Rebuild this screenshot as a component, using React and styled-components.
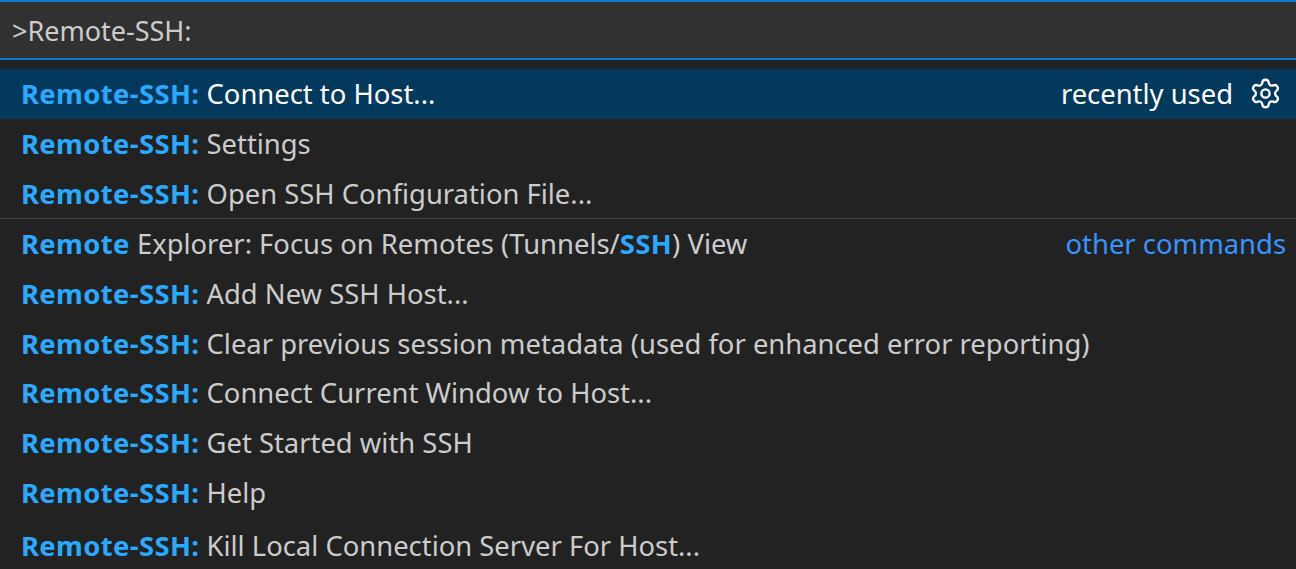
import React from 'react';
import styled, { createGlobalStyle } from 'styled-components';
import { Settings } from 'lucide-react';

const Global = createGlobalStyle`
  body { margin: 0; background: #222222; font-family: "Noto Sans", "Open Sans", sans-serif; }
`;

const Page = styled.div`
  width: 1296px;
  height: 569px;
  background: #222222;
  overflow: hidden;
`;

const InputBox = styled.div`
  height: 56px;
  background: #313131;
  border-top: 2px solid #0a78d4;
  border-bottom: 2px solid #0a78d4;
  display: flex;
  align-items: center;
  padding-left: 12px;
  color: #cccccc;
  font-size: 27px;
`;

const List = styled.div`
  margin-top: 9px;
`;

const Row = styled.div`
  height: 49.7px;
  display: flex;
  align-items: center;
  padding: 0 14px 0 21px;
  font-size: 27.4px;
  color: ${p => (p.$active ? '#ffffff' : '#cccccc')};
  background: ${p => (p.$active ? '#04395e' : 'transparent')};
  border-top: ${p => (p.$sep ? '1px solid #454545' : 'none')};
  white-space: nowrap;
  &:last-child { padding-top: 3px; }
`;

const Label = styled.span`
  flex: 1;
`;

const Hl = styled.b`
  color: #2aaaff;
  font-weight: 700;
  letter-spacing: 0.4px;
`;

const Tag = styled.span`
  color: ${p => (p.$link ? '#3794ff' : '#ffffff')};
  display: flex;
  align-items: center;
  gap: 16px;
  margin-right: ${p => (p.$link ? '-4px' : '0')};
`;

const items = [
  'Add New SSH Host...',
  'Clear previous session metadata (used for enhanced error reporting)',
  'Connect Current Window to Host...',
  'Get Started with SSH',
  'Help',
  'Kill Local Connection Server For Host...',
];

export default function App() {
  return (
    <Page>
      <Global />
      <InputBox>&gt;Remote-SSH:</InputBox>
      <List>
        <Row $active>
          <Label><Hl>Remote-SSH:</Hl> Connect to Host...</Label>
          <Tag>recently used <Settings size={33} strokeWidth={1.7} /></Tag>
        </Row>
        <Row><Label><Hl>Remote-SSH:</Hl> Settings</Label></Row>
        <Row><Label><Hl>Remote-SSH:</Hl> Open SSH Configuration File...</Label></Row>
        <Row $sep>
          <Label><Hl>Remote</Hl> Explorer: Focus on Remotes (Tunnels/<Hl>SSH</Hl>) View</Label>
          <Tag $link>other commands</Tag>
        </Row>
        {items.map(t => (
          <Row key={t}><Label><Hl>Remote-SSH:</Hl> {t}</Label></Row>
        ))}
      </List>
    </Page>
  );
}
